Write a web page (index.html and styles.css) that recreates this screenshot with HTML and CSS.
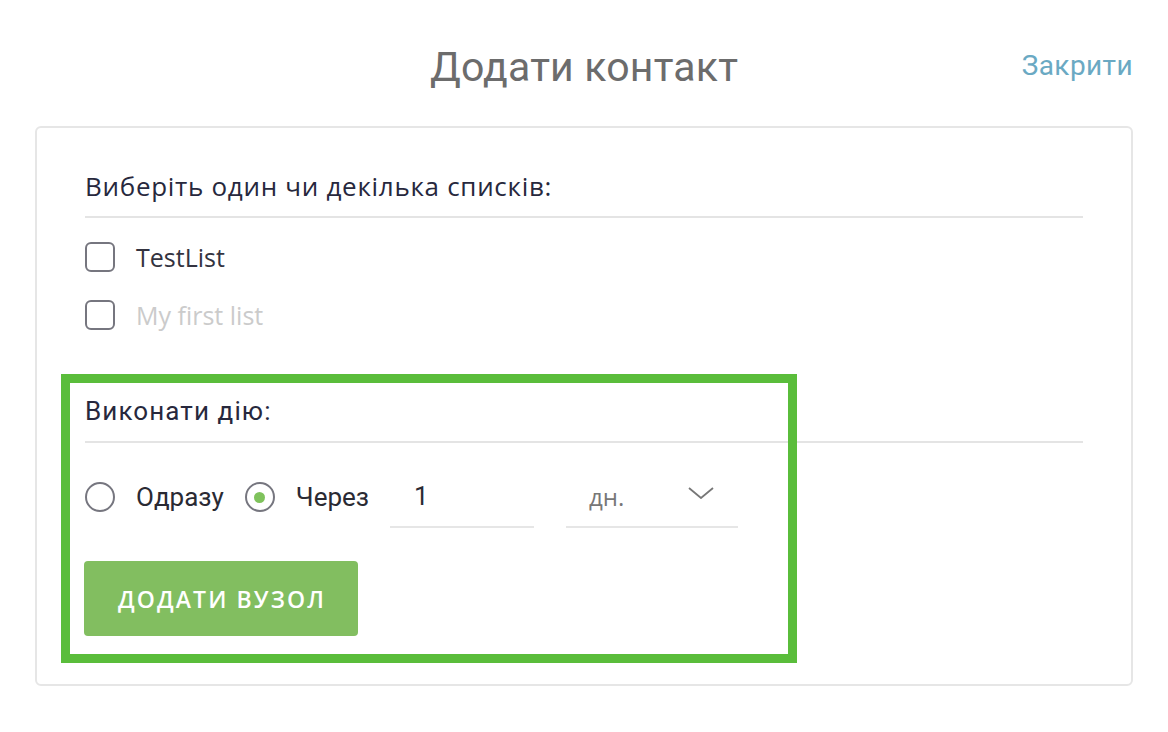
FILE: index.html
```html
<!DOCTYPE html>
<html lang="uk">
<head>
<meta charset="utf-8">
<title>Додати контакт</title>
<link rel="stylesheet" href="styles.css">
</head>
<body>
<header class="top">
  <h1 class="title">Додати контакт</h1>
  <a class="close" href="#">Закрити</a>
</header>
<main class="card">
  <section class="group">
    <h2 class="group-title">Виберіть один чи декілька списків:</h2>
    <label class="check-row"><span class="box"></span><span class="check-label">TestList</span></label>
    <label class="check-row muted"><span class="box"></span><span class="check-label">My first list</span></label>
  </section>
  <section class="group action">
    <h2 class="group-title cond">Виконати дію:</h2>
    <div class="options">
      <span class="radio"></span><span class="opt-label">Одразу</span>
      <span class="radio on"><span class="dot"></span></span><span class="opt-label">Через</span>
      <span class="field num">1</span>
      <span class="field select"><span>дн.</span>
        <svg class="chev" width="26" height="12" viewBox="0 0 26 12"><path d="M1 1 L13 11 L25 1" fill="none" stroke="#777" stroke-width="1.8"/></svg>
      </span>
    </div>
    <button class="btn">ДОДАТИ ВУЗОЛ</button>
  </section>
  <div class="highlight"></div>
</main>
</body>
</html>
```
FILE: styles.css
```css
* { box-sizing: border-box; }
html, body { margin: 0; background: #fff; }
body {
  font-family: "Open Sans", "Noto Sans", sans-serif;
  color: #2b2b3d;
  width: 1168px;
  height: 732px;
  overflow: hidden;
}
.top {
  position: relative;
  height: 126px;
  display: flex;
  align-items: flex-start;
  justify-content: center;
}
.title {
  margin: 40px 0 0;
  font-family: Roboto, "Noto Sans", sans-serif;
  font-weight: 400;
  font-size: 41px;
  line-height: 54px;
  color: #6c6c6c;
  letter-spacing: 0.2px;
}
.close {
  position: absolute;
  right: 35px;
  top: 48px;
  font-family: Roboto, "Noto Sans", sans-serif;
  font-size: 28px;
  line-height: 36px;
  letter-spacing: 0.4px;
  color: #6aa9c3;
  text-decoration: none;
}
.card {
  position: relative;
  margin: 0 35px;
  height: 560px;
  border: 2px solid #e6e6e6;
  border-radius: 6px;
  padding: 41px 48px 0;
}
.group-title {
  margin: 0;
  font-weight: 400;
  font-size: 26px;
  line-height: 34px;
  letter-spacing: 0.7px;
  color: #27283d;
  padding-bottom: 13px;
  border-bottom: 2px solid #e4e4e4;
}
.group-title.cond {
  font-family: Roboto, "Noto Sans", sans-serif;
  font-size: 26px;
  letter-spacing: 1.1px;
}
.check-row {
  display: flex;
  align-items: center;
  height: 30px;
  margin-top: 24px;
}
.check-row + .check-row { margin-top: 28px; }
.box {
  width: 30px;
  height: 30px;
  border: 2px solid #76767f;
  border-radius: 6px;
  flex: none;
}
.check-label {
  margin-left: 21px;
  font-size: 25px;
  color: #333340;
}
.muted .check-label { color: #cbcbcb; }
.action { margin-top: 64px; }
.options {
  display: flex;
  align-items: center;
  margin-top: 23px;
  height: 62px;
}
.radio {
  width: 30px;
  height: 30px;
  border: 2px solid #76767f;
  border-radius: 50%;
  flex: none;
  display: flex;
  align-items: center;
  justify-content: center;
}
.dot {
  width: 11px;
  height: 11px;
  border-radius: 50%;
  background: #7fc25c;
}
.opt-label {
  margin: 0 21px;
  font-family: Roboto, "Noto Sans", sans-serif;
  font-size: 26px;
  color: #2a2a33;
}
.field {
  height: 62px;
  border-bottom: 2px solid #e6e6e6;
  display: flex;
  align-items: center;
  font-size: 26px;
}
.num {
  width: 144px;
  padding-left: 24px;
  color: #2a2a33;
  font-family: Roboto, "Noto Sans", sans-serif;
}
.select {
  width: 172px;
  margin-left: 32px;
  padding-left: 23px;
  padding-right: 24px;
  justify-content: space-between;
  color: #777;
  font-size: 24px;
}
.chev { margin-top: -6px; }
.btn {
  display: block;
  margin-top: 33px;
  margin-left: -1px;
  width: 274px;
  height: 75px;
  border: 0;
  border-radius: 4px;
  background: #82be60;
  color: #fff;
  font-family: "Open Sans", "Noto Sans", sans-serif;
  font-weight: 600;
  font-size: 23px;
  letter-spacing: 2.1px;
  padding: 0 0 0 2px;
}
.highlight {
  position: absolute;
  left: 24px;
  top: 246px;
  width: 736px;
  height: 289px;
  border: 9px solid #5abd3b;
  pointer-events: none;
}
```
